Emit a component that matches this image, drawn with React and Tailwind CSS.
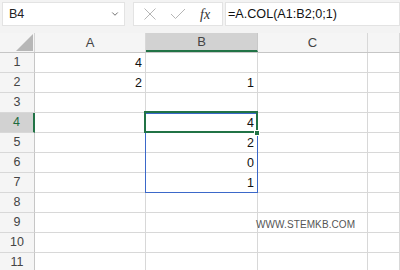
import { ChevronDown } from 'lucide-react'

const cols = [
  { key: 'A', w: 'w-[111px]' },
  { key: 'B', w: 'w-[112px]' },
  { key: 'C', w: 'w-[110px]' },
  { key: 'D', w: 'flex-1' },
]

// cell values by row number
const data = {
  1: { A: '4' },
  2: { A: '2', B: '1' },
  4: { B: '4' },
  5: { B: '2' },
  6: { B: '0' },
  7: { B: '1' },
}

const rows = [1, 2, 3, 4, 5, 6, 7, 8, 9, 10, 11]

export default function App() {
  return (
    <div className="w-[400px] h-[270px] overflow-hidden bg-white font-['Liberation_Sans',Arial,sans-serif] text-[#222]">
      {/* formula bar */}
      <div className="bg-[#f3f3f3] h-[33px] flex items-start pt-[2px] pl-[2px] border-b border-[#f3f3f3]">
        <div className="w-[123px] h-[24px] bg-white border border-[#e3e3e3] flex items-center justify-between pl-[6px] pr-[4px]">
          <span className="text-[12.5px]">B4</span>
          <ChevronDown size={10} strokeWidth={2} className="text-[#555]" />
        </div>
        <div className="ml-[8px] w-[90px] h-[24px] bg-white border border-[#e3e3e3] flex items-center">
          <svg width="14" height="14" viewBox="0 0 14 14" className="ml-[9px]">
            <path d="M1.5 1.5 L12.5 12.5 M12.5 1.5 L1.5 12.5" stroke="#b5b5b5" strokeWidth="1" fill="none" />
          </svg>
          <svg width="16" height="12" viewBox="0 0 16 12" className="ml-[13px]">
            <path d="M1 6 L5.5 10.5 L15 1" stroke="#b5b5b5" strokeWidth="1" fill="none" />
          </svg>
          <span className="ml-[14px] font-['Liberation_Serif',serif] italic text-[14px] text-[#333]">fx</span>
        </div>
        <div className="ml-[2px] flex-1 h-[24px] bg-white border border-[#e3e3e3] flex items-center pl-[2px]">
          <span className="text-[12.6px] text-[#111]">=A.COL(A1:B2;0;1)</span>
        </div>
      </div>

      {/* column headers */}
      <div className="flex h-[20px] bg-[#f5f5f5] border-b border-[#c6c6c6]">
        <div className="w-[35px] border-r border-[#d4d4d4] relative">
          <svg width="17" height="17" viewBox="0 0 17 17" className="absolute right-[1px] bottom-[1px]">
            <path d="M17 0 L17 17 L0 17 Z" fill="#b7b7b7" />
          </svg>
        </div>
        {cols.map((c) => (
          <div
            key={c.key}
            className={`${c.w} flex items-center justify-center text-[13px] text-[#444] ${
              c.key === 'B'
                ? 'bg-[#d2d2d2] text-[#1e6b3e] border-b-2 border-[#217346] border-r border-r-[#c8c8c8]'
                : 'border-r border-[#d8d8d8]'
            }`}
          >
            {c.key === 'D' ? '' : c.key}
          </div>
        ))}
      </div>

      {/* grid */}
      <div className="relative">
        {rows.map((r) => (
          <div key={r} className="flex h-[20px]">
            <div
              className={`w-[35px] flex items-center justify-center text-[12.5px] border-b border-[#d8d8d8] ${
                r === 4
                  ? 'bg-[#d2d2d2] text-[#1e6b3e] border-r-2 border-r-[#217346]'
                  : 'bg-[#f5f5f5] text-[#444] border-r border-r-[#c6c6c6]'
              }`}
            >
              {r}
            </div>
            {cols.map((c) => (
              <div
                key={c.key}
                className={`${c.w} flex items-end justify-end pr-[3px] pb-[2px] text-[12.5px] leading-[14px] text-[#111] border-r border-b border-[#d8d8d8]`}
              >
                {data[r]?.[c.key] ?? ''}
              </div>
            ))}
          </div>
        ))}

        {/* watermark in C9 */}
        <div className="absolute left-[256px] top-[164px] text-[10px] text-[#555] tracking-[0.1px]">WWW.STEMKB.COM</div>

        {/* spill range border B4:B7 */}
        <div className="absolute left-[145px] top-[60px] w-[113px] h-[80px] border border-[#3b68c9] pointer-events-none" />
        {/* active cell B4 */}
        <div className="absolute left-[144px] top-[58px] w-[114px] h-[22px] border-2 border-[#217346] pointer-events-none" />
        <div className="absolute left-[254px] top-[77px] w-[6px] h-[6px] bg-[#217346] border border-white" />
      </div>
    </div>
  )
}
